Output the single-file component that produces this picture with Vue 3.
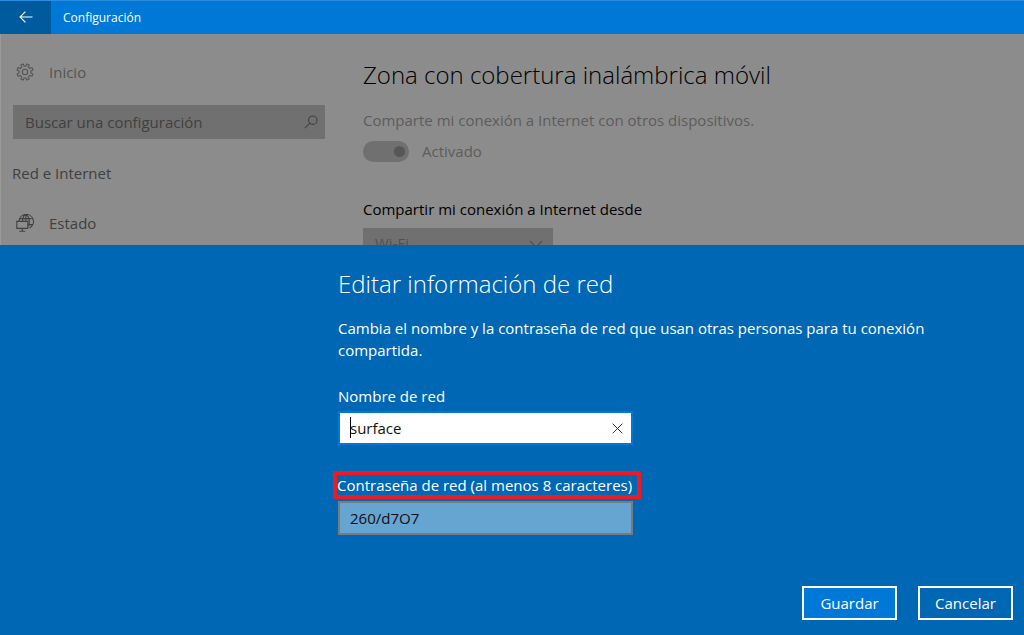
<script setup>
import { ref } from 'vue'

const search = ref('')
const shared = ref(true)
const source = ref('Wi-Fi')
const networkName = ref('surface')
const networkPassword = ref('260/d7O7')
</script>

<template>
  <div class="window">
    <header class="titlebar">
      <button class="back" type="button" aria-label="Atrás">
        <svg width="14" height="12" viewBox="0 0 14 12" fill="none" stroke="currentColor" stroke-width="1.1">
          <path d="M13.5 6H1M6.4 0.6L1 6l5.4 5.4" />
        </svg>
      </button>
      <span class="app-name">Configuración</span>
    </header>

    <div class="page">
      <nav class="sidebar">
        <a class="nav-item home" href="#inicio">
          <svg width="18" height="18" viewBox="0 0 18 18" fill="none" stroke="currentColor" stroke-width="1.1" stroke-linejoin="round">
            <path d="M7.2 0.9L8 3.1h2L10.8 0.9 13.2 1.9 12.3 4l1.5 1.5 2.2-.9 1 2.4L14.9 8v2l2.1.9-1 2.4-2.2-.9-1.5 1.5.9 2.2-2.4 1L10 15H8l-.8 2.1-2.4-1 .9-2.2-1.5-1.5-2.2.9-1-2.4L3.1 10V8L1 7l1-2.4 2.2.9L5.7 4l-.9-2.1z" />
            <circle cx="9" cy="9" r="2.7" />
          </svg>
          Inicio
        </a>
        <div class="search">
          <input v-model="search" type="text" placeholder="Buscar una configuración" aria-label="Buscar una configuración" />
          <svg width="14" height="14" viewBox="0 0 14 14" fill="none" stroke="currentColor" stroke-width="1.1">
            <circle cx="8.8" cy="5.2" r="4.2" />
            <path d="M5.8 8.2L0.8 13.2" />
          </svg>
        </div>
        <h2 class="section">Red e Internet</h2>
        <a class="nav-item" href="#estado">
          <svg width="18" height="18" viewBox="0 0 18 18" fill="none" stroke="currentColor" stroke-width="1.1">
            <path d="M3 7.4A7.2 7.2 0 1 1 13.6 13.9M4 4.6h11.6M12.2 10.6h4.4M6.5 7.4C6.8 3.2 8.2 .8 9.9.8s3.4 3 3.4 7.2c0 1.8-.2 3-.7 4.4M9.9.8v6.6" />
            <path d="M0.8 7.4h11v7h-11zM6.3 14.4v2.6M3.4 17.2h5.8" />
          </svg>
          Estado
        </a>
      </nav>

      <main class="content">
        <h1>Zona con cobertura inalámbrica móvil</h1>
        <p class="hint">Comparte mi conexión a Internet con otros dispositivos.</p>
        <label class="switch">
          <input v-model="shared" type="checkbox" />
          <span>Activado</span>
        </label>
        <label class="share-label" for="source">Compartir mi conexión a Internet desde</label>
        <div class="select">
          <select id="source" v-model="source">
            <option>Wi-Fi</option>
          </select>
          <svg width="14" height="8" viewBox="0 0 14 8" fill="none" stroke="currentColor" stroke-width="1.1">
            <path d="M1 1l6 6 6-6" />
          </svg>
        </div>
      </main>
    </div>

    <form class="dialog" role="dialog" aria-labelledby="dialog-title" @submit.prevent>
      <div class="fields">
        <h2 id="dialog-title">Editar información de red</h2>
        <p>Cambia el nombre y la contraseña de red que usan otras personas para tu conexión compartida.</p>
        <label class="name-label" for="name">Nombre de red</label>
        <div class="name-box">
          <input id="name" v-model="networkName" type="text" />
          <span class="caret"></span>
          <button type="button" aria-label="Borrar" @click="networkName = ''">
            <svg width="11" height="11" viewBox="0 0 11 11" fill="none" stroke="currentColor" stroke-width="1">
              <path d="M0.7 0.7l9.6 9.6M10.3 0.7L0.7 10.3" />
            </svg>
          </button>
        </div>
        <label class="password-label" for="password">Contraseña de red (al menos 8 caracteres)</label>
        <input id="password" v-model="networkPassword" class="password" type="text" />
      </div>
      <div class="actions">
        <button class="save" type="submit">Guardar</button>
        <button type="button">Cancelar</button>
      </div>
    </form>
  </div>
</template>

<style>
body {
  margin: 0;
  background: #8c8c8c;
}
</style>

<style scoped>
.window {
  position: relative;
  box-sizing: border-box;
  min-height: 100vh;
  overflow: hidden;
  background: #8c8c8c;
  color: #000;
  font-family: "Open Sans", "Noto Sans", sans-serif;
  font-size: 15px;
  line-height: 22px;
}
.window * {
  box-sizing: border-box;
}
button,
input,
select {
  margin: 0;
  font: inherit;
  color: inherit;
}
h1,
h2,
p {
  margin: 0;
  font-weight: 400;
}
svg {
  display: block;
  flex: none;
}
.titlebar {
  display: flex;
  align-items: center;
  height: 34px;
  border-top: 1px solid #2b8de0;
  background: #0078d7;
  color: #fff;
  font-size: 12px;
}
.back {
  display: flex;
  align-items: center;
  justify-content: center;
  width: 51px;
  height: 100%;
  padding: 0 0 2px;
  border: 0;
  background: #005a9e;
  color: #fff;
}
.app-name {
  margin-left: 12px;
}
.page {
  display: flex;
}
.sidebar {
  width: 325px;
  padding: 27px 0 0 11px;
  border-left: 1px solid #9a9a9a;
  color: #3f3f3f;
}
.nav-item {
  display: flex;
  align-items: center;
  gap: 15px;
  padding-left: 4px;
  color: #404040;
  text-decoration: none;
}
.home {
  color: #555;
}
.search {
  display: flex;
  align-items: center;
  height: 34px;
  margin: 22px 0 0 1px;
  padding-right: 7px;
  background: #707070;
  color: #424242;
}
.search input {
  flex: 1;
  min-width: 0;
  height: 100%;
  padding: 0 12px;
  border: 0;
  outline: 0;
  background: none;
}
.search input::placeholder {
  color: #404040;
  opacity: 1;
}
.section {
  margin: 23px 0 28px;
  font-size: 15px;
  line-height: 22px;
}
.content {
  flex: 1;
  padding: 24px 24px 0 38px;
}
h1 {
  font-size: 24px;
  font-weight: 350;
  line-height: 34px;
}
.hint {
  margin-top: 17px;
  color: #5c5c5c;
}
.switch {
  display: flex;
  align-items: center;
  gap: 13px;
  margin-top: 9px;
  color: #5c5c5c;
}
.switch input {
  display: flex;
  align-items: center;
  justify-content: flex-end;
  width: 46px;
  height: 21px;
  padding-right: 4px;
  border-radius: 11px;
  background: #707070;
  appearance: none;
}
.switch input::before {
  content: "";
  width: 11px;
  height: 11px;
  border-radius: 50%;
  background: #565656;
}
.share-label {
  display: block;
  margin-top: 36px;
}
.select {
  display: flex;
  align-items: center;
  width: 190px;
  height: 32px;
  margin-top: 8px;
  padding-right: 10px;
  background: #707070;
  color: #505050;
}
.select select {
  flex: 1;
  height: 100%;
  padding: 0 12px 2px;
  border: 0;
  background: none;
  appearance: none;
}
.dialog {
  position: absolute;
  right: 0;
  bottom: 0;
  left: 0;
  padding: 21px 11px 15px;
  background: #0067b4;
  color: #fff;
}
.fields {
  width: 60%;
  margin-left: 327px;
}
.dialog h2 {
  font-size: 24px;
  font-weight: 350;
  line-height: 36px;
}
.dialog p {
  margin-top: 15px;
}
.name-label {
  display: block;
  margin-top: 24px;
}
.name-box {
  position: relative;
  display: flex;
  width: 295px;
  height: 34px;
  margin-top: 4px;
  border: 2px solid #0078d7;
  background: #fff;
  color: #111;
}
.name-box input {
  flex: 1;
  min-width: 0;
  padding: 0 10px;
  border: 0;
  outline: 0;
  background: none;
}
.name-box button {
  display: flex;
  align-items: center;
  justify-content: center;
  width: 28px;
  padding: 0;
  border: 0;
  background: none;
  color: #333;
}
.caret {
  position: absolute;
  top: 4px;
  left: 10px;
  width: 1px;
  height: 21px;
  background: #000;
}
.password-label {
  display: block;
  width: 308px;
  margin: 26px 0 2px -5px;
  border: 4px solid #ed1c24;
  line-height: 20px;
  white-space: nowrap;
}
.password {
  display: block;
  width: 295px;
  height: 34px;
  padding: 0 10px;
  border: 2px solid #7a7a7a;
  outline: 0;
  background: #66a4d2;
  color: #111;
}
.actions {
  display: flex;
  justify-content: flex-end;
  gap: 21px;
  margin-top: 51px;
}
.actions button {
  width: 95px;
  height: 34px;
  padding: 0;
  border: 2px solid #fff;
  background: #0067b4;
}
.actions .save {
  background: #0078d7;
}
</style>
